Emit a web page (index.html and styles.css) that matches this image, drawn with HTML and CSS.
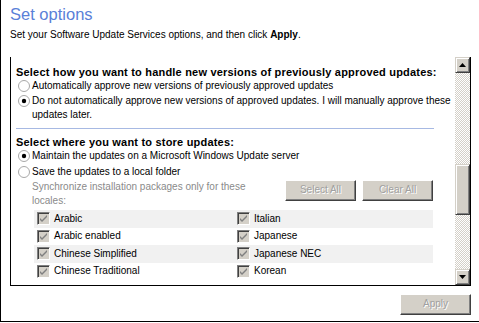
FILE: index.html
```html
<!DOCTYPE html>
<html>
<head>
<meta charset="utf-8">
<link rel="stylesheet" href="styles.css">
</head>
<body>
<div class="window">
  <h1 class="title">Set options</h1>
  <p class="subtitle">Set your Software Update Services options, and then click <b>Apply</b>.</p>
  <div class="box">
    <div class="content">
      <div class="heading">Select how you want to handle new versions of previously approved updates:</div>
      <div class="radio">
        <svg class="rb" width="12" height="12" viewBox="0 0 12 12"><circle cx="6" cy="6" r="5.5" fill="#fff" stroke="#a8a8a8"/></svg>
        <span>Automatically approve new versions of previously approved updates</span>
      </div>
      <div class="radio">
        <svg class="rb" width="12" height="12" viewBox="0 0 12 12"><circle cx="6" cy="6" r="5.5" fill="#fff" stroke="#a8a8a8"/><circle cx="6" cy="6" r="2.2" fill="#000"/></svg>
        <span>Do not automatically approve new versions of approved updates. I will manually approve these updates later.</span>
      </div>
      <div class="sep"></div>
      <div class="heading">Select where you want to store updates:</div>
      <div class="radio">
        <svg class="rb" width="12" height="12" viewBox="0 0 12 12"><circle cx="6" cy="6" r="5.5" fill="#fff" stroke="#a8a8a8"/><circle cx="6" cy="6" r="2.2" fill="#000"/></svg>
        <span>Maintain the updates on a Microsoft Windows Update server</span>
      </div>
      <div class="radio r4">
        <svg class="rb" width="12" height="12" viewBox="0 0 12 12"><circle cx="6" cy="6" r="5.5" fill="#fff" stroke="#a8a8a8"/></svg>
        <span>Save the updates to a local folder</span>
      </div>
      <div class="sync">
        <div class="sync-text">Synchronize installation packages only for these locales:</div>
        <div class="btn small first">Select All</div>
        <div class="btn small">Clear All</div>
      </div>
      <div class="locales">
        <div class="row"><div class="cell"><span class="cb"></span>Arabic</div><div class="cell"><span class="cb"></span>Italian</div></div>
        <div class="row"><div class="cell"><span class="cb"></span>Arabic enabled</div><div class="cell"><span class="cb"></span>Japanese</div></div>
        <div class="row"><div class="cell"><span class="cb"></span>Chinese Simplified</div><div class="cell"><span class="cb"></span>Japanese NEC</div></div>
        <div class="row"><div class="cell"><span class="cb"></span>Chinese Traditional</div><div class="cell"><span class="cb"></span>Korean</div></div>
      </div>
    </div>
    <div class="scrollbar">
      <div class="sbtn"><svg width="7" height="4" viewBox="0 0 7 4"><path d="M3.5 0 L7 4 L0 4 Z" fill="#000"/></svg></div>
      <div class="track">
        <div class="track-top"></div>
        <div class="thumb"></div>
      </div>
      <div class="sbtn"><svg width="7" height="4" viewBox="0 0 7 4"><path d="M0 0 L7 0 L3.5 4 Z" fill="#000"/></svg></div>
    </div>
  </div>
  <div class="footer">
    <div class="btn apply">Apply</div>
  </div>
</div>
</body>
</html>
```
FILE: styles.css
```css
html, body {
  margin: 0;
  padding: 0;
  background: #fff;
}
body {
  font-family: "Liberation Sans", Arial, sans-serif;
  font-size: 10px;
  color: #000;
}
.window {
  width: 479px;
  height: 322px;
  box-sizing: border-box;
  border-left: 1px solid #000;
  border-bottom: 1px solid #000;
  padding-top: 4px;
  overflow: hidden;
}
.title {
  margin: 0 0 0 9px;
  font-size: 16.5px;
  font-weight: normal;
  line-height: 20px;
  color: #5a80d8;
}
.subtitle {
  margin: 4px 0 0 9px;
  line-height: 14px;
}
.box {
  margin: 15px 0 0 9px;
  width: 461px;
  height: 229px;
  box-sizing: border-box;
  border-left: 1px solid #000;
  border-right: 1px solid #000;
  border-bottom: 1px solid #000;
  display: flex;
  overflow: hidden;
}
.content {
  flex: 1;
  padding: 8px 4px 0 5px;
  overflow: hidden;
  line-height: 14px;
}
.heading {
  font-size: 11px;
  font-weight: bold;
  letter-spacing: 0.2px;
  line-height: 14px;
}
.radio {
  display: flex;
  align-items: flex-start;
  margin-top: 1px;
  padding-left: 2px;
}
.heading + .radio {
  margin-top: 0;
}
.radio.r4 {
  margin-top: 2px;
}
.rb {
  flex: none;
  margin: 1px 2px 0 0;
}
.radio span {
  flex: 1;
}
.sep {
  height: 1px;
  background: #a7b9e3;
  margin: 6px 17px 6px 0;
}
.sync {
  display: flex;
  align-items: flex-start;
  padding-left: 16px;
  margin-top: 1px;
  margin-right: 18px;
}
.sync-text {
  width: 236px;
  color: #8a8a8a;
}
.btn {
  background: #d4d0c8;
  border: 1px solid;
  border-color: #fff #404040 #404040 #fff;
  box-shadow: inset -1px -1px 0 #808080;
  color: #a0a0a0;
  text-shadow: 1px 1px 0 #fff;
  text-align: center;
  box-sizing: border-box;
}
.btn.small {
  flex: none;
  width: 71px;
  height: 21px;
  line-height: 18px;
  margin-left: 6px;
}
.btn.small.first {
  margin-left: auto;
}
.locales {
  margin: 2px 18px 0 18px;
}
.row {
  display: grid;
  grid-template-columns: 200px 1fr;
  height: 17.5px;
  align-items: center;
}
.row:nth-child(odd) {
  background: #f1f1f1;
}
.cell {
  display: flex;
  align-items: center;
  padding-left: 3px;
}
.cb {
  width: 13px;
  height: 13px;
  box-sizing: border-box;
  margin-right: 4px;
  border: 1px solid;
  border-color: #808080 #fff #fff #808080;
  box-shadow: inset 1px 1px 0 #404040;
  background: #d4d0c8 url("data:image/svg+xml;utf8,<svg xmlns='http://www.w3.org/2000/svg' width='11' height='11'><path d='M2 5 L4 7 L9 2 L9 4 L4 9 L2 7 Z' fill='%23808080'/></svg>") no-repeat 0 0;
}
.scrollbar {
  width: 15px;
  display: flex;
  flex-direction: column;
  flex: none;
}
.sbtn {
  height: 16px;
  flex: none;
  background: #d4d0c8;
  border: 1px solid;
  border-color: #d4d0c8 #404040 #404040 #d4d0c8;
  box-shadow: inset 1px 1px 0 #fff, inset -1px -1px 0 #808080;
  box-sizing: border-box;
  display: flex;
  align-items: center;
  justify-content: center;
}
.track {
  flex: 1;
  background-color: #fff;
  background-image: repeating-conic-gradient(#d4d0c8 0 25%, #fff 0 50%);
  background-size: 2px 2px;
  display: flex;
  flex-direction: column;
}
.track-top {
  height: 91px;
}
.thumb {
  height: 51px;
  background: #d4d0c8;
  border: 1px solid;
  border-color: #d4d0c8 #404040 #404040 #d4d0c8;
  box-shadow: inset 1px 1px 0 #fff, inset -1px -1px 0 #808080;
  box-sizing: border-box;
}
.footer {
  display: flex;
  justify-content: flex-end;
  padding-right: 8px;
  margin-top: 8px;
}
.btn.apply {
  width: 71px;
  height: 21px;
  line-height: 18px;
}
```
